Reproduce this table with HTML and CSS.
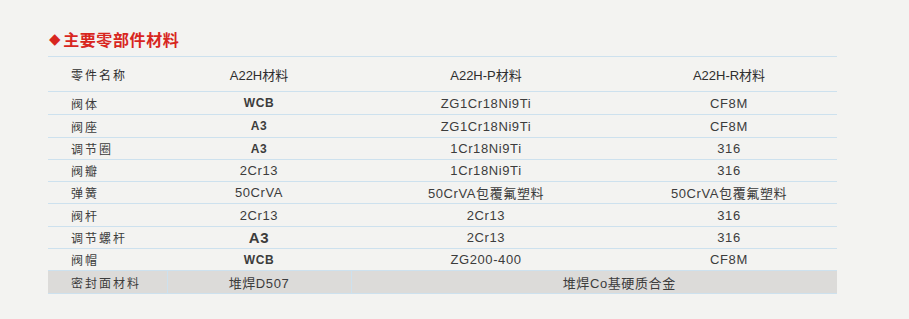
FILE: index.html
```html
<!DOCTYPE html>
<html lang="zh">
<head>
<meta charset="utf-8">
<link rel="stylesheet" href="styles.css">
</head>
<body>
<div class="wrap">
  <h2 class="title"><span class="dia">◆</span>主要零部件材料</h2>
  <table class="mat">
    <colgroup>
      <col class="c1"><col class="c2"><col class="c3"><col class="c4">
    </colgroup>
    <thead>
      <tr class="head"><th class="name">零件名称</th><th>A22H材料</th><th>A22H-P材料</th><th>A22H-R材料</th></tr>
    </thead>
    <tbody>
      <tr class="r23"><td class="name">阀体</td><td class="bold">WCB</td><td>ZG1Cr18Ni9Ti</td><td>CF8M</td></tr>
      <tr class="r23"><td class="name">阀座</td><td class="bold">A3</td><td>ZG1Cr18Ni9Ti</td><td>CF8M</td></tr>
      <tr class="r22"><td class="name">调节圈</td><td class="bold">A3</td><td>1Cr18Ni9Ti</td><td>316</td></tr>
      <tr class="r22"><td class="name">阀瓣</td><td>2Cr13</td><td>1Cr18Ni9Ti</td><td>316</td></tr>
      <tr class="r22"><td class="name">弹簧</td><td>50CrVA</td><td>50CrVA包覆氟塑料</td><td>50CrVA包覆氟塑料</td></tr>
      <tr class="r23"><td class="name">阀杆</td><td>2Cr13</td><td>2Cr13</td><td>316</td></tr>
      <tr class="r22"><td class="name">调节螺杆</td><td class="big">A3</td><td>2Cr13</td><td>316</td></tr>
      <tr class="r22"><td class="name">阀帽</td><td class="bold">WCB</td><td>ZG200-400</td><td>CF8M</td></tr>
      <tr class="r23 gray"><td class="name">密封面材料</td><td>堆焊D507</td><td colspan="2" class="span">堆焊Co基硬质合金</td></tr>
    </tbody>
  </table>
</div>
</body>
</html>
```

FILE: styles.css
```css
html, body {
  margin: 0;
  padding: 0;
  background: #f3f3f1;
}
body {
  font-family: "Liberation Sans", "Noto Sans CJK SC", sans-serif;
  color: #3c3c3c;
}
.wrap {
  padding: 29px 0 0 48px;
}
.title {
  margin: 0 0 7px 1px;
  font-size: 16px;
  line-height: 20px;
  font-weight: bold;
  color: #d8261e;
  letter-spacing: 0.6px;
  display: flex;
  align-items: center;
  font-family: "Noto Sans CJK SC", sans-serif;
}
.dia {
  font-size: 15px;
  margin-right: 2px;
  font-family: "DejaVu Sans", sans-serif;
}
.mat {
  border-collapse: collapse;
  width: 789px;
  table-layout: fixed;
  font-size: 13px;
}
.c1 { width: 119px; }
.c2 { width: 184px; }
.c3 { width: 270px; }
.c4 { width: 216px; }
.mat th, .mat td {
  padding: 0;
  text-align: center;
  vertical-align: middle;
  border-top: 1px solid #cde1ee;
  border-bottom: 1px solid #cde1ee;
  white-space: nowrap;
  letter-spacing: 0.6px;
}
.mat th {
  font-weight: normal;
  font-size: 13px;
  letter-spacing: 0;
  color: #2e2e2e;
}
.mat .name {
  text-align: left;
  padding-left: 23px;
  letter-spacing: 2px;
  font-family: "Noto Sans CJK SC", sans-serif;
  font-size: 12px;
}
.head { height: 35px; }
.r23 { height: 23px; }
.r22 { height: 22px; }
.bold {
  font-weight: bold;
  letter-spacing: 0;
  font-size: 12px;
}
.big {
  font-weight: bold;
  font-size: 15px;
}
.gray td {
  background: #dcdbd9;
}
.gray td + td {
  border-left: 1px solid #cde1ee;
}
.gray .span {
  padding-left: 50px;
}
```
